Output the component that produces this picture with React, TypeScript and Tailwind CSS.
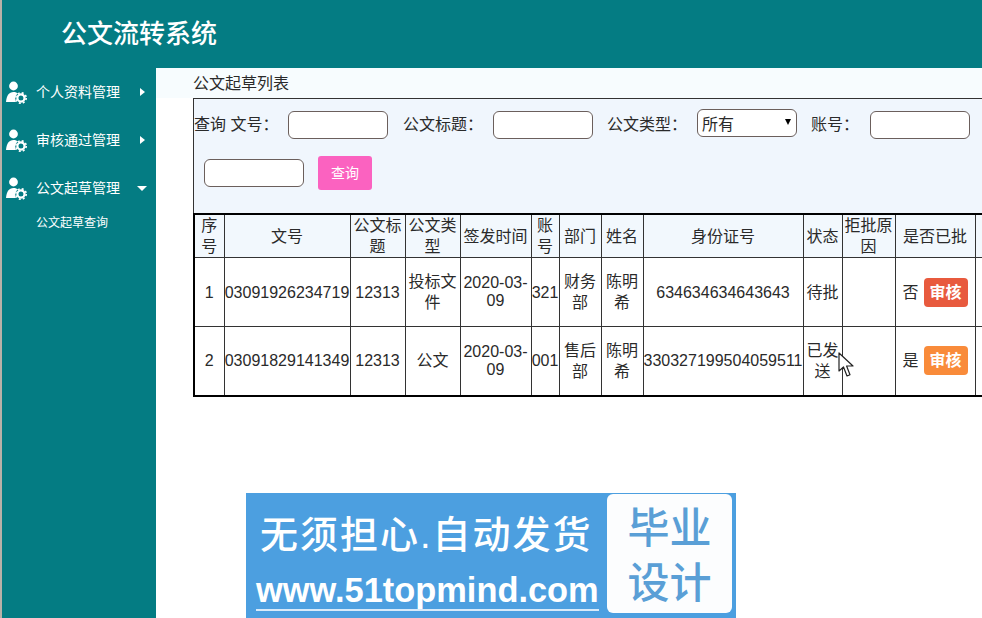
const font = { fontFamily: '"Liberation Sans", "Noto Sans CJK SC", sans-serif' };

function UserGear() {
  return (
    <svg width="22" height="24" viewBox="0 0 22 24" className="shrink-0">
      <circle cx="8.5" cy="6" r="4.4" fill="#fff" />
      <path d="M1 22 C1.5 15.5 4 12 8.5 12 C10.5 12 12 12.6 13 13.6 C10.5 15 9.5 18.5 11 22 Z" fill="#fff" />
      <circle cx="16" cy="18" r="3.6" fill="none" stroke="#fff" strokeWidth="2.2" />
      <circle cx="16" cy="18" r="5.2" fill="none" stroke="#fff" strokeWidth="1.6" strokeDasharray="2 2.1" />
    </svg>
  );
}

function Nav({ label, open }: { label: string; open?: boolean }) {
  return (
    <div className="flex h-[24px] items-center text-white text-[14px]">
      <div className="ml-[3px] w-[31px]">
        <UserGear />
      </div>
      <span className="w-[104px]">{label}</span>
      {open ? (
        <span className="w-0 h-0 ml-[-3px] border-x-[5px] border-x-transparent border-t-[5px] border-t-white" />
      ) : (
        <span className="w-0 h-0 border-y-[4px] border-y-transparent border-l-[5px] border-l-white" />
      )}
    </div>
  );
}

const inputCls = "h-[28px] w-[100px] rounded-[6px] border border-[#6b5f5c] bg-white";
const cols = [30, 126, 55, 55, 71, 28, 42, 42, 160, 39, 53, 80, 60];
const heads = ["序号", "文号", "公文标题", "公文类型", "签发时间", "账号", "部门", "姓名", "身份证号", "状态", "拒批原因", "是否已批", ""];
const rows = [
  ["1", "03091926234719", "12313", "投标文件", "2020-03-09", "321", "财务部", "陈明希", "634634634643643", "待批", "", "否", "#e85a3e"],
  ["2", "03091829141349", "12313", "公文", "2020-03-09", "001", "售后部", "陈明希", "330327199504059511", "已发送", "", "是", "#f98b3a"],
];

export default function App() {
  return (
    <div style={font} className="relative h-[618px] w-[982px] overflow-hidden bg-white text-[16px] text-[#2a2a2a]">
      <header className="flex h-[68px] items-center border-l-2 border-[#b9b1a8] bg-[#047c83] pl-[59px]">
        <h1 className="text-[26px] font-medium text-white">公文流转系统</h1>
      </header>
      <div className="flex h-[550px]">
        <aside className="w-[156px] shrink-0 border-l-2 border-[#b9b1a8] bg-[#047c83] pt-[12px]">
          <div className="flex flex-col gap-[24px]">
            <Nav label="个人资料管理" />
            <Nav label="审核通过管理" />
            <Nav label="公文起草管理" open />
          </div>
          <div className="ml-[34px] mt-[13px] text-[12px] leading-[20px] text-white">公文起草查询</div>
        </aside>
        <main className="min-w-0 flex-1 pl-[37px]">
          <div className="-ml-[37px] h-[30px] bg-[#f7fcfe] pl-[37px] pt-[1px] leading-[30px]">公文起草列表</div>
          <div className="h-[115px] border-l border-t border-[#333] bg-[#f0f6fd] pt-[12px]">
            <div className="flex items-center">
              <span className="w-[94px] whitespace-pre">查询 文号：</span>
              <input className={inputCls} />
              <span className="ml-[15px] w-[90px]">公文标题：</span>
              <input className={inputCls} />
              <span className="ml-[14px] w-[90px]">公文类型：</span>
              <div className="relative">
                <select className="-mt-[4px] block h-[28px] w-[100px] appearance-none rounded-[6px] border border-[#6b5f5c] bg-white pl-[4px] pt-[3px]">
                  <option>所有</option>
                </select>
                <span className="absolute right-[6px] top-[6px] h-0 w-0 border-x-[3px] border-t-[6px] border-x-transparent border-t-black" />
              </div>
              <span className="ml-[14px] w-[59px]">账号：</span>
              <input className={inputCls} />
            </div>
            <div className="mt-[17px] flex items-center pl-[10px]">
              <input className={inputCls} />
              <button className="ml-[14px] h-[34px] w-[54px] rounded-[3px] bg-[#fb62c0] text-[14px] text-white">查询</button>
            </div>
          </div>
          <table className="w-[838px] table-fixed border-collapse border-2 border-black bg-white text-center leading-[21px]">
            <colgroup>
              {cols.map((w, i) => (
                <col key={i} style={{ width: w }} />
              ))}
            </colgroup>
            <thead>
              <tr className="h-[43px] bg-[#f2f8fd]">
                {heads.map((h, i) => (
                  <th key={i} className="border border-[#333] p-0 font-normal">{h}</th>
                ))}
              </tr>
            </thead>
            <tbody>
              {rows.map((r) => (
                <tr key={r[0]} className="h-[69px]">
                  {r.slice(0, 11).map((c, i) => (
                    <td key={i} className={`border border-[#333] p-0 ${i === 4 ? "leading-[18px]" : ""}`}>{c}</td>
                  ))}
                  <td className="border border-[#333] p-0">
                    <div className="flex items-center justify-center gap-[5px]">
                      <span>{r[11]}</span>
                      <span style={{ backgroundColor: r[12] }} className="flex h-[29px] w-[44px] items-center justify-center rounded-[4px] text-[16px] font-bold text-white">审核</span>
                    </div>
                  </td>
                  <td className="border border-[#333] p-0" />
                </tr>
              ))}
            </tbody>
          </table>
          <div className="ml-[53px] mt-[96px] flex h-[125px] w-[490px] items-stretch bg-[#4c9fe0] pl-[10px] pr-[4px] pt-[1px] pb-[5px] text-white">
            <div className="flex w-[351px] shrink-0 flex-col pt-[18px]">
              <div className="ml-[4px] whitespace-nowrap text-[38px] font-medium leading-[46px] tracking-[2px]">无须担心.自动发货</div>
              <div className="mt-[13px] w-[343px] whitespace-nowrap border-b-2 border-[#d8eafa] text-[34.4px] font-bold leading-[38px]">www.51topmind.com</div>
            </div>
            <div className="flex flex-1 flex-col items-center justify-center rounded-[6px] bg-[#fcfdfe] pt-[6px] text-[42px] font-medium leading-[55px] text-[#5a9fd6]">
              <div>毕业</div>
              <div>设计</div>
            </div>
          </div>
        </main>
      </div>
      <svg width="17" height="26" viewBox="0 0 17 26" className="absolute left-[838px] top-[352px]">
        <path d="M1 1 L1 19 L5.5 15 L9 24 L12 22.8 L8.6 14 L15 14 Z" fill="#fff" stroke="#222" strokeWidth="1.2" strokeLinejoin="round" />
      </svg>
    </div>
  );
}
